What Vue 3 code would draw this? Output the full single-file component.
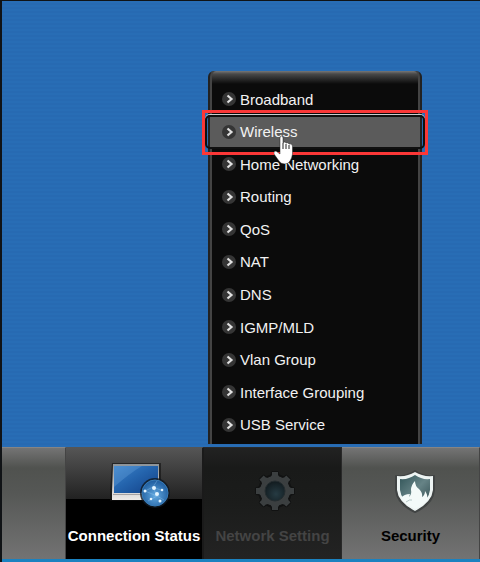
<template>
    <div class="page">
        <main class="content"></main>
        <nav class="panel">
            <div class="panel-edge"></div>
            <button class="panel-item active" type="button">
                <svg class="panel-icon" viewBox="0 0 64 56" aria-hidden="true">
                    <defs>
                        <linearGradient id="screen" x1="0" y1="0" x2="1" y2="1">
                            <stop offset="0" stop-color="#3d83c9" />
                            <stop offset="0.45" stop-color="#2464ad" />
                            <stop offset="1" stop-color="#123f86" />
                        </linearGradient>
                        <linearGradient id="frame" x1="0" y1="0" x2="0" y2="1">
                            <stop offset="0" stop-color="#8c9297" />
                            <stop offset="1" stop-color="#eeeae8" />
                        </linearGradient>
                        <radialGradient id="globe" cx="0.5" cy="0.6" r="0.6">
                            <stop offset="0" stop-color="#62a9e0" />
                            <stop offset="1" stop-color="#1c5a9d" />
                        </radialGradient>
                    </defs>
                    <path d="M10 7H59V45H8V36Z" fill="#101010" opacity="0.6" />
                    <path d="M11 8H57V37L58 44H10V37Z" fill="url(#frame)" />
                    <path d="M12 10H56V37H12Z" fill="url(#screen)" />
                    <path d="M12 10H40Q28 17 12 31Z" fill="#75b0e6" opacity="0.28" />
                    <path d="M11 38H57V39H11Z" fill="#a7a3a3" />
                    <g transform="translate(4 1)">
                        <circle cx="49" cy="36" r="15" fill="#101820" opacity="0.8" />
                        <circle cx="49" cy="36" r="13" fill="url(#globe)" stroke="#397db9" />
                        <path d="M39 34L47 30L57 34M47 30L51 39L42 44M51 39L58 43M47 30L51 24M39 34L51 39" fill="none" stroke="#9ccbf0" opacity="0.35" />
                        <g fill="#e4f5ff">
                            <circle cx="48" cy="31" r="2" />
                            <circle cx="51" cy="37" r="2" />
                            <circle cx="39" cy="34" r="1.5" />
                            <circle cx="56" cy="33" r="1.3" />
                            <circle cx="45" cy="42" r="1.3" />
                            <circle cx="54" cy="44" r="1.5" />
                        </g>
                    </g>
                </svg>
                <span>Connection Status</span>
            </button>
            <div class="panel-cell">
                <button class="panel-item dimmed" type="button" aria-expanded="true">
                    <svg class="panel-icon" viewBox="0 0 64 56" aria-hidden="true">
                        <defs>
                            <radialGradient id="hub" cx="0.55" cy="0.65" r="0.6">
                                <stop offset="0" stop-color="#263b43" />
                                <stop offset="1" stop-color="#131d21" />
                            </radialGradient>
                        </defs>
                        <g stroke="#111212" stroke-width="4" fill="#111212" stroke-linejoin="round">
                            <circle cx="34" cy="35" r="15" />
                            <path v-for="a in teeth" :key="a" d="M31 22L32 17H36L37 22Z" :transform="`rotate(${a} 34 35)`" />
                        </g>
                        <g fill="#3b3f40">
                            <circle cx="34" cy="35" r="15" />
                            <path v-for="a in teeth" :key="a" d="M29 22L31 19V16H37V19L39 22Z" :transform="`rotate(${a} 34 35)`" />
                        </g>
                        <circle cx="34" cy="35" r="10" fill="url(#hub)" stroke="#242c2f" />
                    </svg>
                    <span>Network Setting</span>
                </button>
                <div class="menu">
                    <ul class="menu-list">
                        <li v-for="item in items" :key="item" class="menu-row">
                            <a href="#" class="menu-link" :class="{ selected: item === selected }" @click.prevent="selected = item">
                                <svg class="bullet" viewBox="0 0 14 14" aria-hidden="true">
                                    <circle cx="7" cy="7" r="7" fill="#353535" />
                                    <path d="M5.500 3.500L9.500 7L5.500 10.500" fill="none" stroke="#e0e0e0" stroke-width="2.2" />
                                </svg>
                                <span>{{ item }}</span>
                            </a>
                            <template v-if="item === selected">
                                <div class="focus-ring"></div>
                                <div class="highlight"></div>
                                <svg class="pointer" viewBox="0 0 20 28" aria-hidden="true">
                                    <path d="M6 2Q6 0 7.500 0Q9 0 9 2V7Q11 5 12 7Q14 6 15 8Q18 7 18.500 10V18Q18 22 16 25Q14 28 11 28Q7 28 5 25L0 18Q-1 15 2 15L6 18Z" fill="#fff" stroke="#222" stroke-width="0.5" />
                                    <path d="M9 7V13M12 8V13M15 9V13" stroke="#222" fill="none" />
                                </svg>
                            </template>
                        </li>
                    </ul>
                </div>
            </div>
            <button class="panel-item" type="button">
                <svg class="panel-icon" viewBox="0 0 64 56" aria-hidden="true">
                    <defs>
                        <linearGradient id="shield" x1="0" y1="0" x2="1" y2="1">
                            <stop offset="0" stop-color="#315458" />
                            <stop offset="0.5" stop-color="#668386" />
                            <stop offset="1" stop-color="#2e494d" />
                        </linearGradient>
                    </defs>
                    <g transform="translate(0 8)">
                        <path d="M36 7Q44 13 55 12V26Q54 40 36 48Q18 40 17 26V12Q28 13 36 7Z" fill="#303333" stroke="#414444" stroke-width="2" stroke-linejoin="round" />
                        <path d="M36 8Q44 13 54 12V26Q53 38 36 47Q19 38 18 26V12Q28 13 36 8Z" fill="#edf4f3" />
                        <path d="M36 11Q43 16 51 15V26Q50 37 36 43Q22 37 21 26V15Q29 16 36 11Z" fill="url(#shield)" />
                        <path d="M22 34Q25 30 31 30L30 33Q33 30 32 26Q32 21 36 17Q36 22 40 25Q44 29 43 33Q46 31 46 27Q49 31 48 34L51 32Q47 40 36 45Q26 40 22 34Z" fill="#f3faf9" />
                        <path d="M27 38Q31 35 33 36" fill="none" stroke="#b5c8c7" />
                    </g>
                </svg>
                <span>Security</span>
            </button>
        </nav>
    </div>
</template>

<script setup>
import { ref } from 'vue';

const items = [
    'Broadband',
    'Wireless',
    'Home Networking',
    'Routing',
    'QoS',
    'NAT',
    'DNS',
    'IGMP/MLD',
    'Vlan Group',
    'Interface Grouping',
    'USB Service',
];

const selected = ref('Wireless');
const teeth = [0, 45, 90, 135, 180, 225, 270, 315];
</script>

<style>
body {
    margin: 0;
}
</style>

<style scoped>
.page {
    display: flex;
    flex-direction: column;
    box-sizing: border-box;
    min-height: 100vh;
    border-top: 1px solid #101316;
    border-left: 2px solid #101316;
    background: repeating-linear-gradient(#286db5 0 2px, #276ab2 2px 4px);
    font-family: "Liberation Sans", Arial, sans-serif;
}
.content {
    flex: 1;
}
.panel {
    display: grid;
    grid-template-columns: 64fr 138fr 138fr 138fr;
    border-bottom: 3px solid #1b82c0;
}
.panel-edge,
.panel-item {
    background: linear-gradient(#747474, #50524f 18%, #555755 40%, #737373);
    border: 0;
    border-top: 1px solid #858585;
    border-right: 1px solid #444;
}
.panel-cell {
    position: relative;
}
.panel-item {
    display: flex;
    flex-direction: column;
    align-items: center;
    gap: 14px;
    box-sizing: border-box;
    width: 100%;
    height: 112px;
    padding: 8px 0 0;
    color: #000;
    font-family: inherit;
    font-size: 15px;
    font-weight: bold;
    line-height: 20px;
    white-space: nowrap;
}
.panel-item.active {
    background: linear-gradient(#555, #222 51px, #000 51px);
    border-color: #555;
    border-right: 2px solid #1a1a1a;
    color: #fff;
}
.panel-item.dimmed {
    background: linear-gradient(#222, #191a19 18%, #1b1c1b 50%, #232323);
    border-color: #292929;
    color: #444;
}
.panel-icon {
    flex: none;
    width: 64px;
    height: 56px;
    overflow: visible;
}
.menu {
    position: absolute;
    bottom: 100%;
    left: 4px;
    width: 214px;
    box-sizing: border-box;
    margin-bottom: 3px;
    padding: 12px 0 3px;
    border: 0 solid #222;
    border-width: 0 2px;
    border-radius: 6px 6px 0 0;
    background: linear-gradient(#777, #484848 3px, #111 12px, #0b0b0b 13px);
    box-shadow: inset 2px 0 #444, inset -2px 0 #444;
}
.menu-list {
    display: grid;
    grid-auto-rows: 1fr;
    min-height: 358px;
    margin: 0;
    padding: 0;
    list-style: none;
}
.menu-row {
    position: relative;
    display: flex;
}
.menu-link {
    display: flex;
    flex: 1;
    align-items: center;
    gap: 4px;
    padding-left: 12px;
    color: #f2f2f2;
    font-size: 15px;
    text-decoration: none;
}
.menu-link.selected {
    background: #5b5b5b;
}
.bullet {
    width: 14px;
    height: 14px;
}
.focus-ring {
    position: absolute;
    inset: -1px -5px;
    border: 2px solid #101010;
    border-radius: 5px;
    box-shadow: 0 -1px #ccc;
    pointer-events: none;
}
.highlight {
    position: absolute;
    z-index: 1;
    inset: -6px -8px -7px;
    border: 3px solid #fb3737;
    pointer-events: none;
}
.pointer {
    position: absolute;
    z-index: 2;
    top: 20px;
    left: 64px;
    width: 20px;
    height: 28px;
    pointer-events: none;
}
</style>
